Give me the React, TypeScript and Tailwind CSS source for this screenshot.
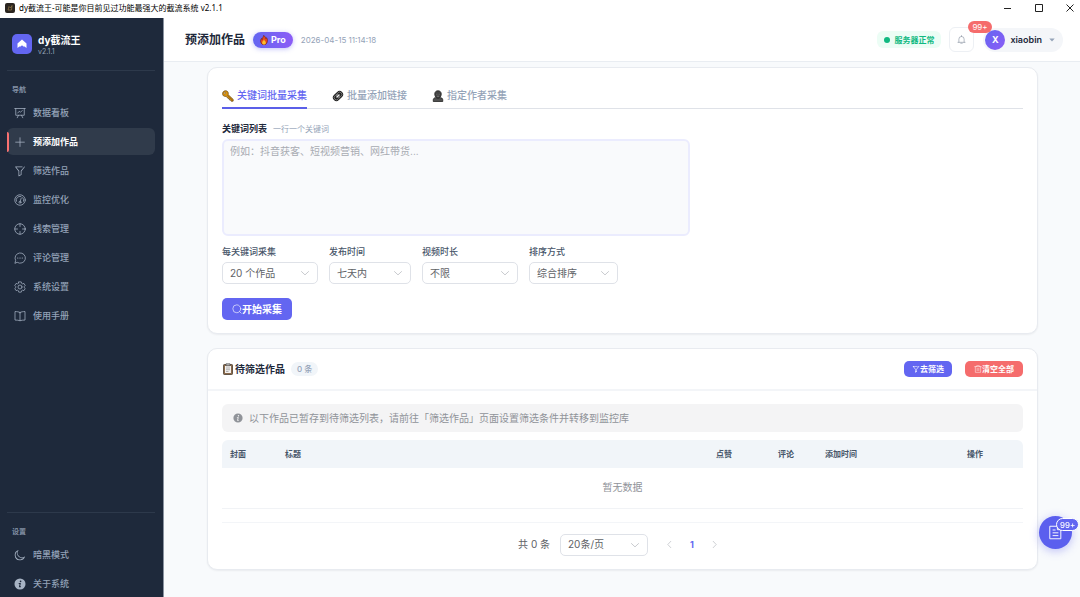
import { useState } from "react";
import type { ReactNode } from "react";
import clsx from "clsx";

type IconProps = { className?: string };

function Line({ className, children }: IconProps & { children: ReactNode }) {
  return (
    <svg
      className={clsx("shrink-0", className)}
      viewBox="0 0 24 24"
      fill="none"
      stroke="currentColor"
      strokeWidth="1.5"
      strokeLinecap="round"
      strokeLinejoin="round"
      aria-hidden="true"
    >
      {children}
    </svg>
  );
}

function Solid({ className, d }: IconProps & { d: string }) {
  return (
    <svg
      className={clsx("shrink-0", className)}
      viewBox="0 0 1024 1024"
      fill="currentColor"
      fillRule="evenodd"
      aria-hidden="true"
    >
      <path d={d} />
    </svg>
  );
}

const BoardIcon = ({ className }: IconProps) => (
  <Line className={className}>
    <path d="M1.5 3h21M3.5 3v13.5h17V3M9 16.5l-2.5 5M15 16.5l2.5 5M7.5 12l3-3.5 2.5 2 3.5-3.5" />
  </Line>
);

const PlusIcon = ({ className }: IconProps) => (
  <Solid
    className={className}
    d="M480 480V128a32 32 0 0 1 64 0v352h352a32 32 0 1 1 0 64H544v352a32 32 0 1 1-64 0V544H128a32 32 0 0 1 0-64z"
  />
);

const FilterIcon = ({ className }: IconProps) => (
  <Solid
    className={className}
    d="M384 523.392V928a32 32 0 0 0 46.336 28.608l192-96A32 32 0 0 0 640 832V523.392l280.768-343.104a32 32 0 1 0-49.536-40.576l-288 352A32 32 0 0 0 576 512v300.224l-128 64V512a32 32 0 0 0-7.232-20.288L195.52 192H704a32 32 0 1 0 0-64H128a32 32 0 0 0-24.768 52.288z"
  />
);

const GaugeIcon = ({ className }: IconProps) => (
  <Line className={className}>
    <circle cx="12" cy="12" r="10.5" />
    <path d="M4.8 14.5a7.5 7.5 0 0 1 9-9.6M17.5 7.2a7.5 7.5 0 0 1 1.7 7.3M12.5 14.5L14.5 8" />
    <circle cx="12" cy="16.5" r="2" />
  </Line>
);

const AimIcon = ({ className }: IconProps) => (
  <Line className={className}>
    <circle cx="12" cy="12" r="10.5" />
    <path d="M12 1.5V7M12 17v5.5M1.5 12H7M17 12h5.5" />
  </Line>
);

const ChatIcon = ({ className }: IconProps) => (
  <Line className={className}>
    <path d="M2 22l1.3-5A10.3 10.3 0 1 1 7 21z" />
    <path d="M7.5 12h.1M12 12h.1M16.5 12h.1" strokeWidth="2.4" />
  </Line>
);

const SettingIcon = ({ className }: IconProps) => (
  <Line className={className}>
    <path d="M9.5 1.8h5l.8 3 1.6.9 3-.8 2.5 4.3-2.2 2.2v1.4l2.2 2.1-2.5 4.3-3-.8-1.6.9-.8 3h-5l-.8-3-1.6-.9-3 .8-2.5-4.3 2.2-2.1v-1.4L1.6 9.2l2.500-4.300 3 .8 1.600-.9z" />
    <circle cx="12" cy="12" r="4" />
  </Line>
);

const BookIcon = ({ className }: IconProps) => (
  <Line className={className}>
    <path d="M12 5c-2.5-1.4-6-1.9-10-1.9v17c4 0 7.5.4 10 1.4 2.5-1 6-1.4 10-1.4v-17c-4 0-7.5.5-10 1.9zM12 5v16" />
  </Line>
);

const MoonIcon = ({ className }: IconProps) => (
  <Solid
    className={className}
    d="M240.448 240.448a384 384 0 1 0 559.424 525.696 448 448 0 0 1-542.016-542.08 391 391 0 0 0-17.408 16.384m181.056 362.048a384 384 0 0 0 525.632 16.384A448 448 0 1 1 405.056 76.8a384 384 0 0 0 16.448 525.696"
  />
);

const InfoIcon = ({ className }: IconProps) => (
  <Solid
    className={className}
    d="M512 40a472 472 0 1 0 0 944 472 472 0 0 0 0-944zM560 215a72 72 0 1 1 0 144 72 72 0 0 1 0-144zM410 430h176l-62 280h76l-20 80H415l62-280h-85z"
  />
);

const ChevronIcon = ({ className }: IconProps) => (
  <Line className={className}>
    <path d="M3.5 8.5l8.5 8 8.5-8" />
  </Line>
);

const KeyIcon = () => (
  <svg className="size-3 shrink-0" viewBox="0 0 24 24" aria-hidden="true">
    <path
      d="M2.5 3.5C5 .8 9.5.8 11.5 3.5c1.3 1.8 1.4 4 .6 5.7L22.5 19l-.3 3.3-3.7.2-1.3-2.3-2.5-.5-.4-2.7-2.8-.6-3-3.7C5.5 13.2 3.2 12.5 2 10.5.7 8.2.9 5.3 2.500 3.500z"
      fill="#d9920f"
      stroke="#5f410e"
      strokeWidth="1.4"
    />
    <path d="M10.5 10.5L20.5 20" stroke="#7a5210" strokeWidth="1.2" />
    <circle cx="5.5" cy="6" r="1.7" fill="#fff" stroke="#5f410e" />
  </svg>
);

const LinkIcon = () => (
  <svg
    className="size-3 shrink-0"
    viewBox="0 0 24 24"
    fill="none"
    aria-hidden="true"
  >
    <g transform="rotate(-45 12 12)">
      <rect x="0.500" y="5" width="23" height="14" rx="7" fill="#222" />
      <rect x="3" y="7.500" width="11" height="9" rx="4.500" stroke="#999" strokeWidth="1.300" />
      <rect x="10" y="7.500" width="11" height="9" rx="4.500" stroke="#999" strokeWidth="1.300" />
      <path d="M9 12h6" stroke="#eee" strokeWidth="2.600" strokeLinecap="round" />
    </g>
  </svg>
);

const PersonIcon = () => (
  <svg className="size-3 shrink-0" viewBox="0 0 24 24" aria-hidden="true">
    <path
      d="M2.5 23v-3.5c0-3 3-4.5 6.5-4.5h6c3.5 0 6.5 1.5 6.5 4.5V23z"
      fill="#505050"
      stroke="#1c1c1c"
      strokeWidth="1.5"
    />
    <path
      d="M12 1.5c4 0 6.5 2.5 6.5 6.5 0 4.500-2.500 8.500-6.500 8.500S5.500 12.500 5.500 8c0-4 2.500-6.500 6.500-6.500z"
      fill="#444"
      stroke="#1c1c1c"
      strokeWidth="1.5"
    />
    <path d="M9 8.5h1.5M13.5 8.5H15M10 12.500h4" stroke="#999" strokeWidth="1.2" />
  </svg>
);

const FireIcon = () => (
  <svg className="size-[10px] shrink-0" viewBox="0 0 24 24" aria-hidden="true">
    <path
      d="M11 .8c4.5 3 5 6 5.5 8.2.8-.8 1.2-1.8 1.2-2.8C20 8.500 21 12 20 16c-1 4.500-4 7.500-8 7.500S5 20.500 4 16.500c-.8-3.800.8-6.500 2.500-8.500.3 1.500.8 2.300 1.300 3C7.500 6.500 11 5 11 .8z"
      fill="#e5481d"
      stroke="#5b1d1a"
      strokeWidth="1.3"
    />
    <path
      d="M12 10c.5 3 4.500 5 4.500 8.500 0 2.500-2 4.500-4.500 4.500s-4.500-2-4.500-4.500C7.500 15 11.500 13.500 12 10z"
      fill="#fbc02d"
    />
  </svg>
);

const ClipboardIcon = () => (
  <svg className="size-3 shrink-0" viewBox="0 0 24 24" aria-hidden="true">
    <rect x="3" y="3" width="18" height="20" rx="1.5" fill="#8a6a4b" stroke="#4a3c2f" strokeWidth="1.6" />
    <path d="M6 6h12v14H6z" fill="#f4f1ef" />
    <path d="M8 1.5h8v4H8z" fill="#b9b9b9" stroke="#444" strokeWidth="1.2" />
    <path d="M8 10h8M8 13.5h8M8 17h5" stroke="#8d8d8d" strokeWidth="1.3" />
  </svg>
);

const navItems = [
  { label: "数据看板", Icon: BoardIcon },
  { label: "预添加作品", Icon: PlusIcon },
  { label: "筛选作品", Icon: FilterIcon },
  { label: "监控优化", Icon: GaugeIcon },
  { label: "线索管理", Icon: AimIcon },
  { label: "评论管理", Icon: ChatIcon },
  { label: "系统设置", Icon: SettingIcon },
  { label: "使用手册", Icon: BookIcon },
];

const settingItems = [
  { label: "暗黑模式", Icon: MoonIcon },
  { label: "关于系统", Icon: InfoIcon },
];

const tabs = [
  { label: "关键词批量采集", Icon: KeyIcon },
  { label: "批量添加链接", Icon: LinkIcon },
  { label: "指定作者采集", Icon: PersonIcon },
];

const filters = [
  { id: "count", label: "每关键词采集", value: "20 个作品", width: "w-24" },
  { id: "publish", label: "发布时间", value: "七天内", width: "w-[82px]" },
  { id: "duration", label: "视频时长", value: "不限", width: "w-24" },
  { id: "sort", label: "排序方式", value: "综合排序", width: "w-[89px]" },
];

const columns = [
  { label: "封面", className: "w-[55px] text-left" },
  { label: "标题", className: "text-left" },
  { label: "点赞", className: "w-[62px] text-center" },
  { label: "评论", className: "w-[62px] text-center" },
  { label: "添加时间", className: "w-[110px] text-left" },
  { label: "操作", className: "w-24 text-center" },
];

function TitleBar() {
  return (
    <div className="flex h-[18px] shrink-0 items-center bg-white pb-[3px] pl-[5px] font-['Noto_Sans','Noto_Sans_CJK_SC',sans-serif] text-[8px] text-black">
      <svg className="mr-1 size-[10px]" viewBox="0 0 20 20" aria-hidden="true">
        <rect width="20" height="20" rx="4" fill="#2b2620" />
        <path d="M6 14l2-7 3 3 3-5-1 9z" fill="none" stroke="#8d7446" strokeWidth="1.5" />
      </svg>
      <span className="flex-1">
        dy截流王-可能是你目前见过功能最强大的截流系统 v2.1.1
      </span>
      <div className="flex items-center gap-[23px] pr-[6px]">
        <button type="button" aria-label="最小化">
          <svg className="size-2" viewBox="0 0 8 8" stroke="#222">
            <path d="M0 4.5h7" />
          </svg>
        </button>
        <button type="button" aria-label="最大化">
          <svg className="size-2" viewBox="0 0 8 8" stroke="#222" fill="none">
            <path d="M.5.5h7v7h-7z" />
          </svg>
        </button>
        <button type="button" aria-label="关闭">
          <svg className="size-2" viewBox="0 0 8 8" stroke="#222">
            <path d="M.5.5l7 7M7.5.5l-7 7" />
          </svg>
        </button>
      </div>
    </div>
  );
}

type NavItemProps = {
  label: string;
  Icon: (props: IconProps) => ReactNode;
  active?: boolean;
};

function NavItem({ label, Icon, active }: NavItemProps) {
  return (
    <a
      href="#"
      aria-current={active ? "page" : undefined}
      className={clsx(
        "flex h-[27px] items-center rounded-md text-[9px]",
        active
          ? "bg-[#303b4b] font-bold text-white"
          : "font-medium text-[#94a3b8]",
      )}
    >
      <span
        className={clsx(
          "mr-[5px] h-5 w-[2px] rounded-r",
          active && "bg-[#f87171]",
        )}
      />
      <Icon className="mr-[7px] size-3 text-[#a7b3c4]" />
      {label}
    </a>
  );
}

function Sidebar() {
  return (
    <aside className="flex w-[164px] shrink-0 flex-col border-r border-[#8a93a0] bg-[#1e293b] pr-[8px] pl-[7px]">
      <div className="flex h-[53px] items-center gap-[6px] border-b border-[#2d394b] pl-[5px]">
        <svg className="size-5" viewBox="0 0 20 20" aria-hidden="true">
          <rect width="20" height="20" rx="5" fill="#6366f1" />
          <path d="M10 5.5l4.500 4V14L12.600 12.500h-1.200L10 11.200l-1.400 1.300H7.400L5.500 14V9.500z" fill="#fff" />
        </svg>
        <div className="pt-[2px]">
          <p className="text-[10px] leading-3 font-bold text-white">dy截流王</p>
          <p className="text-[7px] leading-[11px] text-[#94a3b8]">v2.1.1</p>
        </div>
      </div>
      <p className="pt-[14px] pb-1 pl-[5px] text-[7px] leading-[10px] font-bold text-[#8391a5]">
        导航
      </p>
      <nav className="flex flex-1 flex-col gap-[2px]">
        {navItems.map((item) => (
          <NavItem key={item.label} {...item} active={item.label === "预添加作品"} />
        ))}
      </nav>
      <div className="border-t border-[#2d394b]">
        <p className="pt-[14px] pb-1 pl-[5px] text-[7px] leading-[10px] font-bold text-[#8391a5]">
          设置
        </p>
        <nav className="flex flex-col gap-[2px]">
          {settingItems.map((item) => (
            <NavItem key={item.label} {...item} />
          ))}
        </nav>
      </div>
    </aside>
  );
}

function Header() {
  return (
    <header className="flex h-[44px] shrink-0 items-center border-b border-[#e9edf2] bg-white pr-[17px] pl-[21px]">
      <h1 className="text-[12px] font-bold text-[#1e293b]">预添加作品</h1>
      <span className="ml-2 flex h-4 items-center gap-[2px] rounded-full bg-linear-to-r from-[#6366f1] to-[#8b5cf6] pr-[7px] pl-[6px] text-[9px] font-bold text-white shadow-[0_1px_5px_rgba(99,102,241,0.4)]">
        <FireIcon />
        Pro
      </span>
      <time className="ml-2 flex-1 text-[8px] text-[#94a3b8]">
        2026-04-15 11:14:18
      </time>
      <span className="flex h-[17px] items-center gap-1 rounded-md bg-[#ecfdf5] px-[7px] text-[8px] font-bold text-[#10b981]">
        <span className="size-[6px] rounded-full bg-[#10b981]" />
        服务器正常
      </span>
      <button
        type="button"
        aria-label="通知"
        className="relative ml-2 flex size-[25px] items-center justify-center rounded-md border border-[#edf0f4] bg-white text-[#7c8797]"
      >
        <Line className="size-[9px]">
          <path d="M2.5 19.5h19M5 19.5V11a7 7 0 0 1 14 0v8.5M12 1.5V4M10 22h4" />
        </Line>
        <span className="absolute -top-[7px] left-[18px] flex h-3 items-center rounded-full bg-[#f56c6c] px-1 text-[8px] text-white">
          99+
        </span>
      </button>
      <button
        type="button"
        className="ml-[9px] flex h-6 items-center rounded-full bg-[#f4f6f9] pr-2 pl-[2px] text-[9px] font-semibold text-[#1e293b]"
      >
        <span className="mr-[5px] flex size-5 items-center justify-center rounded-full bg-linear-to-br from-[#6366f1] to-[#8b5cf6] font-bold text-white">
          X
        </span>
        xiaobin
        <svg className="ml-[7px] h-1 w-[6px]" viewBox="0 0 6 4" aria-hidden="true">
          <path d="M.3.4h5.4L3 3.6z" fill="#94a3b8" />
        </svg>
      </button>
    </header>
  );
}

type SelectProps = { id: string; value: string; width: string };

function Select({ id, value, width }: SelectProps) {
  return (
    <div className={clsx("relative", width)}>
      <select
        id={id}
        className="block h-[22px] w-full appearance-none rounded-[5px] border border-[#dfe2e8] bg-white pl-[7px] text-[10px] text-[#606266] outline-none"
      >
        <option>{value}</option>
      </select>
      <ChevronIcon className="pointer-events-none absolute top-[6px] right-2 size-[10px] text-[#a8abb2]" />
    </div>
  );
}

function CollectCard() {
  const [tab, setTab] = useState(0);

  return (
    <section className="rounded-[10px] border border-[#e8ebf0] bg-white px-[14px] pb-[13px] shadow-[0_1px_2px_rgba(15,23,42,0.06)]">
      <div role="tablist" className="flex gap-[25px] border-b border-[#dfe2e8] pt-4">
        {tabs.map(({ label, Icon }, idx) => (
          <button
            key={label}
            type="button"
            role="tab"
            aria-selected={idx === tab}
            onClick={() => setTab(idx)}
            className={clsx(
              "-mb-px flex h-[25px] items-center gap-[3px] border-b-2 text-[10px] font-medium",
              idx === tab
                ? "border-[#5b5fe8] text-[#6366f1]"
                : "border-transparent text-[#94a3b8]",
            )}
          >
            <Icon />
            {label}
          </button>
        ))}
      </div>
      <div className="flex items-center gap-[6px] pt-[13px] pb-[3px] leading-[14px]">
        <label htmlFor="keywords" className="text-[9px] font-bold text-[#1e293b]">
          关键词列表
        </label>
        <span className="text-[8px] text-[#94a3b8]">一行一个关键词</span>
      </div>
      <textarea
        id="keywords"
        placeholder="例如：抖音获客、短视频营销、网红带货..."
        className="block h-[97px] w-full max-w-[468px] resize-none rounded-md border-2 border-[#ebecfe] bg-[#f9fafc] px-[6px] py-[2px] text-[10px] leading-4 text-[#606266] outline-none placeholder:text-[#a8abb2]"
      />
      <div className="flex flex-wrap gap-[11px] pt-[10px]">
        {filters.map(({ id, label, value, width }) => (
          <div key={id}>
            <label
              htmlFor={id}
              className="mb-1 block text-[9px] leading-3 font-medium text-[#475569]"
            >
              {label}
            </label>
            <Select id={id} value={value} width={width} />
          </div>
        ))}
      </div>
      <button
        type="button"
        className="mt-[14px] flex h-[22px] items-center rounded-[5px] bg-[#6366f1] px-[10px] text-[10px] font-bold text-white"
      >
        <Line className="size-[10px]">
          <circle cx="11.5" cy="11.5" r="9.5" />
          <path d="M18.5 18.5l3.5 3.5" />
        </Line>
        开始采集
      </button>
    </section>
  );
}

function PendingCard() {
  return (
    <section className="mt-[14px] rounded-[10px] border border-[#e8ebf0] bg-white shadow-[0_1px_2px_rgba(15,23,42,0.06)]">
      <div className="flex h-[42px] items-center border-b-2 border-[#f3f5f8] px-[14px]">
        <ClipboardIcon />
        <h2 className="ml-px text-[10px] font-bold text-[#1e293b]">待筛选作品</h2>
        <span className="ml-[6px] rounded-full bg-[#f1f5f9] px-[6px] text-[8px] leading-[14px] font-medium text-[#94a3b8]">
          0 条
        </span>
        <div className="ml-auto flex gap-[13px] text-[8px] font-bold text-white">
          <button
            type="button"
            className="flex h-4 items-center rounded-[5px] bg-[#6366f1] px-2"
          >
            <FilterIcon className="size-2" />
            去筛选
          </button>
          <button
            type="button"
            className="flex h-4 items-center rounded-[5px] bg-[#f56c6c] px-[9px]"
          >
            <Line className="size-2">
              <path d="M2 5h20M8 5V2h8v3M4 5v17h16V5M9.5 10v7M14.5 10v7" />
            </Line>
            清空全部
          </button>
        </div>
      </div>
      <div className="px-[14px] py-[13px]">
        <div className="flex h-7 items-center gap-[6px] rounded-md bg-[#f4f4f5] px-[11px] text-[10px] text-[#909399]">
          <InfoIcon className="size-[10px]" />
          以下作品已暂存到待筛选列表，请前往「筛选作品」页面设置筛选条件并转移到监控库
        </div>
        <table className="mt-2 w-full table-fixed">
          <thead>
            <tr className="h-7 text-[8px] text-[#475569]">
              {columns.map(({ label, className }) => (
                <th
                  key={label}
                  className={clsx(
                    "bg-[#f1f5f9] px-2 font-bold first:rounded-tl-md last:rounded-tr-md",
                    className,
                  )}
                >
                  {label}
                </th>
              ))}
            </tr>
          </thead>
          <tbody>
            <tr className="h-10 border-b border-[#f1f3f6]">
              <td
                colSpan={columns.length}
                className="text-center text-[10px] text-[#909399]"
              >
                暂无数据
              </td>
            </tr>
          </tbody>
        </table>
        <div className="mt-[13px] flex items-center justify-center border-t border-[#f3f5f8] pt-[11px] pr-2 text-[10px] text-[#606266]">
          <label htmlFor="page-size" className="mr-[10px]">
            共 0 条
          </label>
          <Select id="page-size" value="20条/页" width="w-[88px]" />
          <button type="button" aria-label="上一页" disabled className="ml-[17px]">
            <ChevronIcon className="size-[9px] rotate-90 text-[#a8abb2]" />
          </button>
          <button type="button" className="mx-4 text-[9px] font-bold text-[#6366f1]">
            1
          </button>
          <button type="button" aria-label="下一页" disabled>
            <ChevronIcon className="size-[9px] -rotate-90 text-[#a8abb2]" />
          </button>
        </div>
      </div>
    </section>
  );
}

function LogButton() {
  return (
    <button
      type="button"
      aria-label="日志"
      className="fixed right-2 bottom-12 flex size-[33px] items-center justify-center rounded-full bg-[#5b5fee] text-white shadow-[0_2px_10px_rgba(99,102,241,0.4)]"
    >
      <Line className="size-[15px]">
        <path d="M3.5 2h11.5l5.5 5.5V22h-17zM15 2v5.5h5.5M8 8h3.5M8 12.5h8M8 17h8" />
      </Line>
      <span className="absolute top-[2px] left-[17px] flex h-[13px] items-center rounded-full border border-white bg-[#6366f1] px-[3px] text-[8px] font-medium">
        99+
      </span>
    </button>
  );
}

export default function App() {
  return (
    <div className="flex h-screen flex-col overflow-hidden font-['Inter','Noto_Sans_CJK_SC',sans-serif]">
      <TitleBar />
      <div className="flex min-h-0 flex-1">
        <Sidebar />
        <div className="flex min-w-0 flex-1 flex-col">
          <Header />
          <main className="flex-1 overflow-hidden bg-[#f8fafc] pt-[5px] pr-[42px] pl-[43px]">
            <CollectCard />
            <PendingCard />
          </main>
        </div>
      </div>
      <LogButton />
    </div>
  );
}
